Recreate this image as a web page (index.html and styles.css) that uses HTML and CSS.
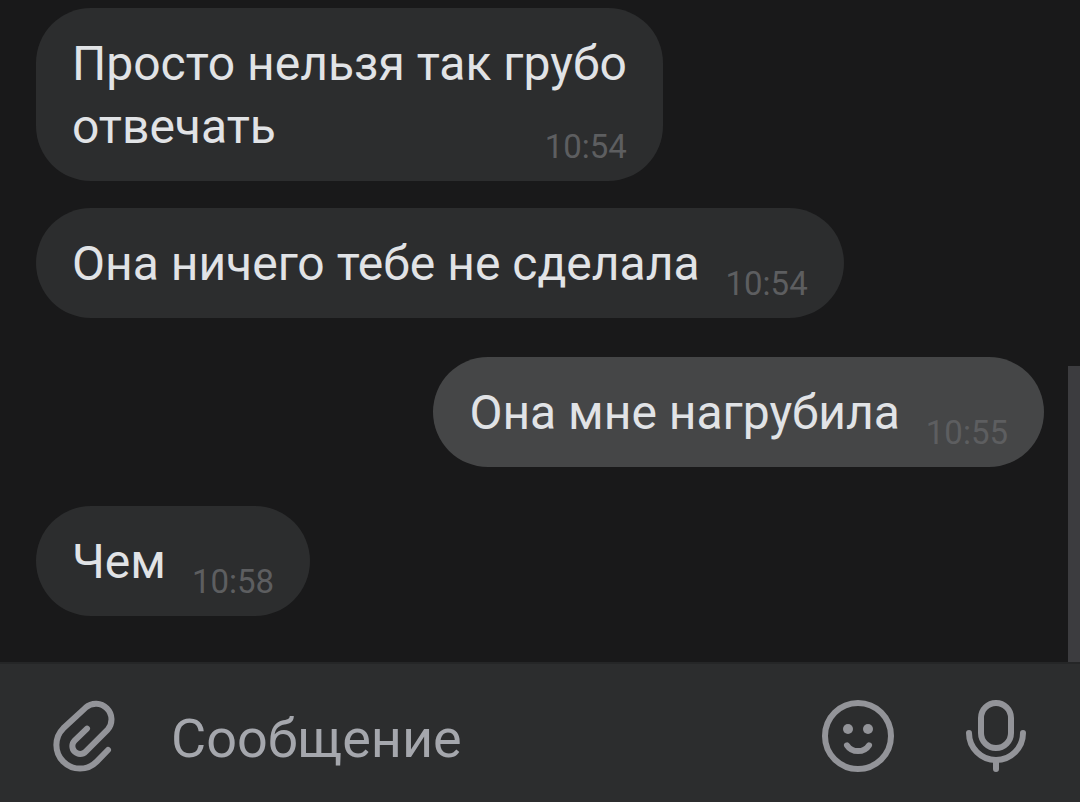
FILE: index.html
```html
<!DOCTYPE html>
<html lang="ru">
<head>
<meta charset="utf-8">
<meta name="viewport" content="width=device-width, initial-scale=1">
<title>Чат</title>
<link rel="stylesheet" href="styles.css">
</head>
<body>
<div class="app">
  <main class="history">
    <ul class="messages">
      <li class="bubble bubble-wrap"><p class="text">Просто нельзя так грубо<br>отвечать</p><time class="time">10:54</time></li>
      <li class="bubble"><p class="text">Она ничего тебе не сделала</p><time class="time">10:54</time></li>
      <li class="bubble bubble-own"><p class="text">Она мне нагрубила</p><time class="time">10:55</time></li>
      <li class="bubble bubble-reply"><p class="text">Чем</p><time class="time">10:58</time></li>
    </ul>
    <div class="scrollbar"></div>
  </main>
  <form class="composer">
    <button class="tool" type="button" aria-label="Прикрепить">
      <svg class="icon" viewBox="0 0 72 80"><path d="M59 54 L47.7 65.7 A23.6 23.6 0 0 1 14.3 32.3 L36.7 11.6 A15.6 15.6 0 0 1 58.7 33.6 L36.7 55.6 A7.8 7.8 0 0 1 25.6 44.6 L38 32.6"/></svg>
    </button>
    <input class="field" type="text" placeholder="Сообщение" aria-label="Сообщение">
    <button class="tool" type="button" aria-label="Эмодзи">
      <svg class="icon" viewBox="0 0 72 80"><circle cx="36" cy="40" r="33"/><path d="M25 49.3 C30 57 42 57 47 49.3"/><circle class="dot" cx="26" cy="33" r="5"/><circle class="dot" cx="46" cy="33" r="5"/></svg>
    </button>
    <button class="tool" type="button" aria-label="Голосовое сообщение">
      <svg class="icon" viewBox="0 0 72 80"><rect x="21" y="7" width="30" height="45" rx="15"/><path d="M9 37 A27 27 0 0 0 63 37 M36 64 V73"/></svg>
    </button>
  </form>
</div>
</body>
</html>
```

FILE: styles.css
```css
* { box-sizing: border-box; }
body { margin: 0; background: #19191a; color: #e1e3e6; font-family: Roboto, sans-serif; }
.app { display: flex; flex-direction: column; min-height: 100vh; }
.history { flex: 1; display: flex; position: relative; }
.messages { flex: 1; display: flex; flex-direction: column; align-items: flex-start; margin: 0; padding: 8px 36px 46px; list-style: none; }
.bubble { display: flex; align-items: flex-end; gap: 26px; padding: 24px 36px 23px; border-radius: 55px; background: #2c2d2e; margin-bottom: 27px; }
.bubble-wrap { position: relative; }
.bubble-wrap .time { position: absolute; right: 36px; bottom: 16px; margin: 0; }
.bubble-own { align-self: flex-end; background: #454647; margin: 12px 0 39px; }
.bubble-reply { margin-bottom: 0; }
.text { margin: 0; font-size: 48px; line-height: 63px; }
.time { margin-bottom: -7px; font-size: 33px; line-height: 36px; color: #5d5e60; }
.scrollbar { position: absolute; right: 0; bottom: 0; width: 12px; height: 296px; background: #3c3c3f; }
.composer { display: flex; align-items: center; min-height: 140px; padding: 6px 48px 0 49px; background: #2c2d2e; border-top: 2px solid #252627; }
.tool { flex: none; width: 72px; height: 80px; padding: 0; border: 0; background: none; }
.tool + .tool { margin-left: 66px; }
.icon { display: block; width: 72px; height: 80px; fill: none; stroke: #939499; stroke-width: 6; stroke-linecap: round; stroke-linejoin: round; }
.dot { fill: #939499; stroke: none; }
.field { flex: 1; min-width: 0; margin: 0 20px 0 50px; padding: 6px 0 0; border: 0; outline: 0; background: none; color: #e1e3e6; font: 54px/72px Roboto, sans-serif; }
.field::placeholder { color: #a5a7ad; opacity: 1; }
```
